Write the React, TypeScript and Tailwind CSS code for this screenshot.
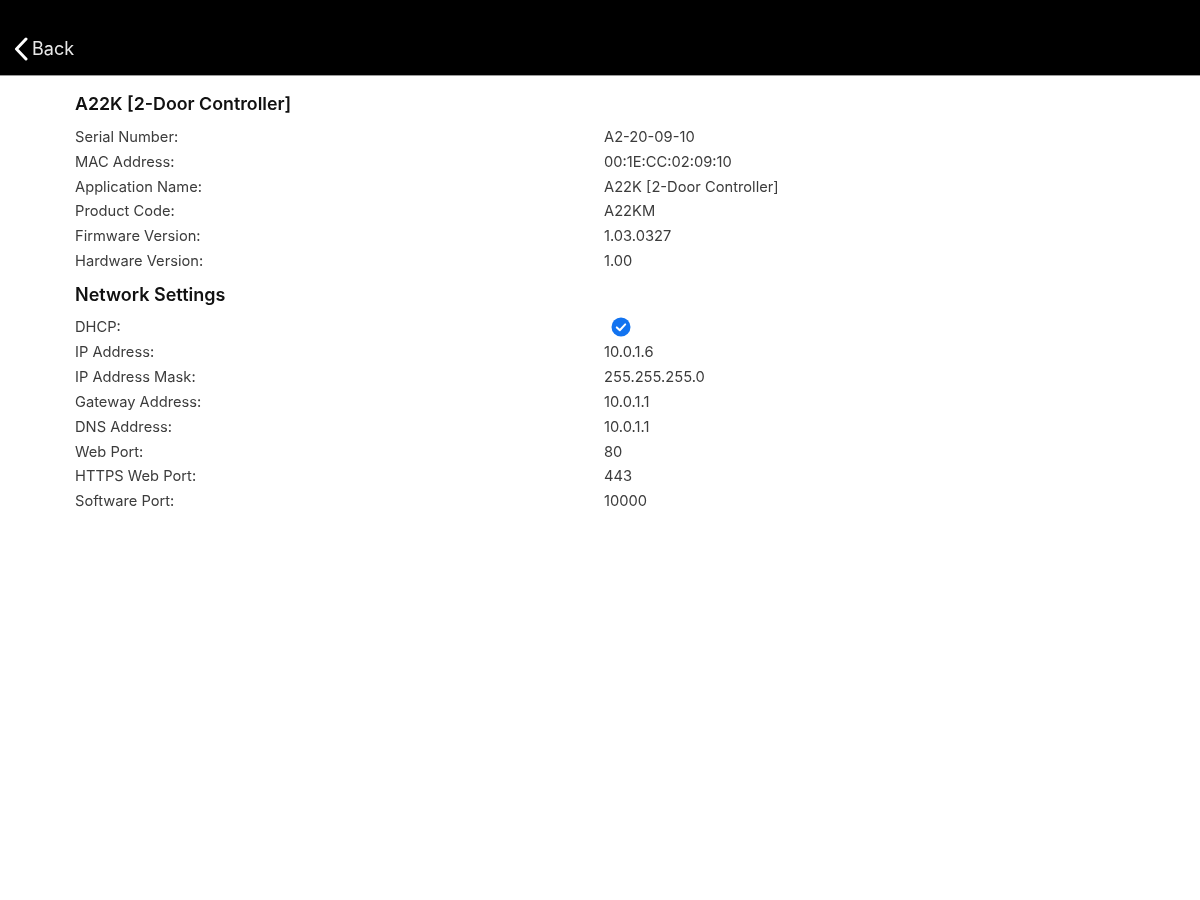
const deviceRows = [
  ["Serial Number:", "A2-20-09-10"],
  ["MAC Address:", "00:1E:CC:02:09:10"],
  ["Application Name:", "A22K [2-Door Controller]"],
  ["Product Code:", "A22KM"],
  ["Firmware Version:", "1.03.0327"],
  ["Hardware Version:", "1.00"],
];

const networkRows = [
  ["IP Address:", "10.0.1.6"],
  ["IP Address Mask:", "255.255.255.0"],
  ["Gateway Address:", "10.0.1.1"],
  ["DNS Address:", "10.0.1.1"],
  ["Web Port:", "80"],
  ["HTTPS Web Port:", "443"],
  ["Software Port:", "10000"],
];

function Row({ label, children }: { label: string; children: React.ReactNode }) {
  return (
    <div className="flex h-[24.9px] items-center text-[14.7px] text-[#3c3c3c]">
      <div className="w-[529px] shrink-0">{label}</div>
      <div>{children}</div>
    </div>
  );
}

export default function App() {
  return (
    <div className="min-h-[900px] bg-white font-['Inter',sans-serif] blur-[0.5px]">
      {/* Top bar */}
      <header className="flex h-[76px] items-end border-b border-[#9a9a9a] bg-black pb-[14px] pl-[13px]">
        <svg width="16" height="24" viewBox="0 0 16 24" fill="none" className="mr-[3px]">
          <path d="M13 2 L3.5 12 L13 22" stroke="white" strokeWidth="3" strokeLinecap="round" strokeLinejoin="round" />
        </svg>
        <span className="text-[18px] leading-[24px] text-[#e8e8e8]">Back</span>
      </header>

      <main className="pl-[75px]">
        <h2 className="pt-[15.5px] text-[17.8px] leading-[24px] font-semibold text-[#111]">
          A22K [2-Door Controller]
        </h2>
        <div className="mt-[8.8px]">
          {deviceRows.map(([label, value]) => (
            <Row key={label} label={label}>{value}</Row>
          ))}
        </div>
        <h2 className="flex h-[41px] items-center text-[18px] font-semibold text-[#111]">Network Settings</h2>
        <Row label="DHCP:">
          <svg width="20" height="20" viewBox="0 0 20 20" className="ml-[7px]">
            <circle cx="10" cy="10" r="9.5" fill="#1273f0" />
            <path d="M5.8 10.4 L8.8 13.2 L14.2 7.4" fill="none" stroke="white" strokeWidth="2" strokeLinecap="round" strokeLinejoin="round" />
          </svg>
        </Row>
        {networkRows.map(([label, value]) => (
          <Row key={label} label={label}>{value}</Row>
        ))}
      </main>
    </div>
  );
}
